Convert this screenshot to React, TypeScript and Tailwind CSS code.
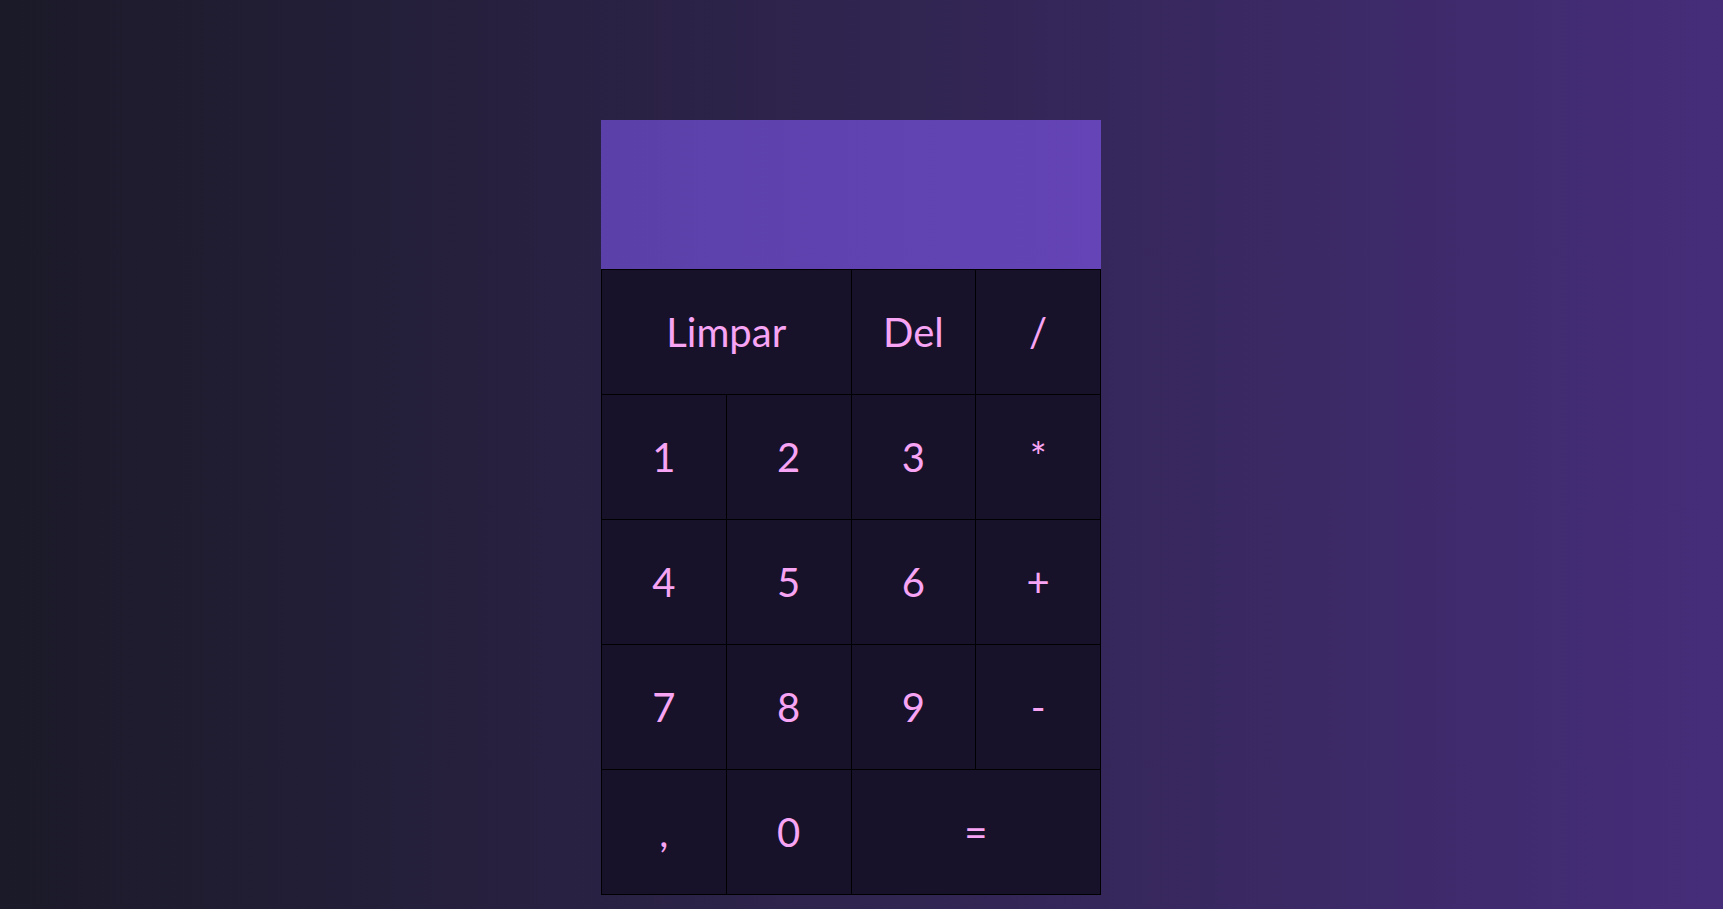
import React from "react";

const keys: { label: string; span?: boolean }[] = [
  { label: "Limpar", span: true },
  { label: "Del" },
  { label: "/" },
  { label: "1" },
  { label: "2" },
  { label: "3" },
  { label: "*" },
  { label: "4" },
  { label: "5" },
  { label: "6" },
  { label: "+" },
  { label: "7" },
  { label: "8" },
  { label: "9" },
  { label: "-" },
  { label: "," },
  { label: "0" },
  { label: "=", span: true },
];

export default function App() {
  return (
    <div
      className="flex min-h-[909px] w-full justify-center bg-gradient-to-r from-[#1b1a28] to-[#462d7a] pt-[120px] pr-[21px]"
      style={{ fontFamily: "Lato, 'Open Sans', sans-serif" }}
    >
      <div className="w-[500px]">
        <div className="h-[150px] border-b border-black bg-gradient-to-r from-[#5b40a9] to-[#6444b6]" />
        <div className="grid w-full grid-cols-4 grid-rows-[repeat(5,124px)] gap-px border-x border-b border-black bg-black">
          {keys.map((k) => (
            <button
              key={k.label}
              type="button"
              className={`flex items-center justify-center bg-[#17122a] text-[40px] leading-none text-[#f7a4f4] ${
                k.span ? "col-span-2" : ""
              }`}
            >
              {k.label}
            </button>
          ))}
        </div>
      </div>
    </div>
  );
}
